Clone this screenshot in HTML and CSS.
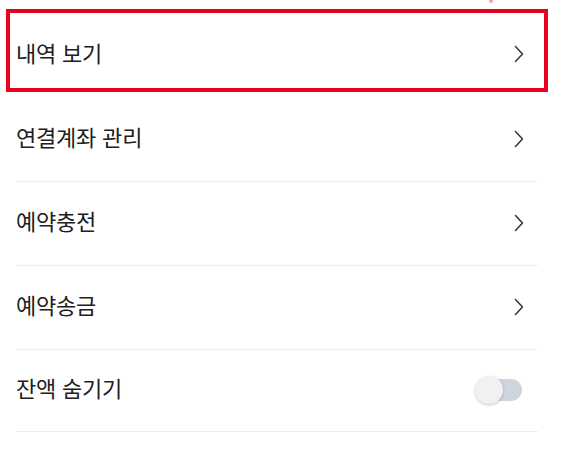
FILE: index.html
```html
<!DOCTYPE html>
<html lang="ko">
<head>
<meta charset="utf-8">
<link rel="stylesheet" href="styles.css">
</head>
<body>
<div class="page">
  <span class="mark"></span>
  <ul class="menu">
    <li class="row row-first highlighted">
      <span class="label">내역 보기</span>
      <svg class="chev" viewBox="0 0 10 18" width="10" height="18"><polyline points="1.5,1.5 8.5,9 1.5,16.5" fill="none" stroke="#333" stroke-width="1.5" stroke-linecap="round" stroke-linejoin="round"/></svg>
    </li>
    <li class="row">
      <span class="label">연결계좌 관리</span>
      <svg class="chev" viewBox="0 0 10 18" width="10" height="18"><polyline points="1.5,1.5 8.5,9 1.5,16.5" fill="none" stroke="#333" stroke-width="1.5" stroke-linecap="round" stroke-linejoin="round"/></svg>
    </li>
    <li class="row">
      <span class="label">예약충전</span>
      <svg class="chev" viewBox="0 0 10 18" width="10" height="18"><polyline points="1.5,1.5 8.5,9 1.5,16.5" fill="none" stroke="#333" stroke-width="1.5" stroke-linecap="round" stroke-linejoin="round"/></svg>
    </li>
    <li class="row">
      <span class="label">예약송금</span>
      <svg class="chev" viewBox="0 0 10 18" width="10" height="18"><polyline points="1.5,1.5 8.5,9 1.5,16.5" fill="none" stroke="#333" stroke-width="1.5" stroke-linecap="round" stroke-linejoin="round"/></svg>
    </li>
    <li class="row row-last">
      <span class="label">잔액 숨기기</span>
      <span class="toggle"><span class="knob"></span></span>
    </li>
  </ul>
</div>
</body>
</html>
```

FILE: styles.css
```css
* { box-sizing: border-box; }
html, body { margin: 0; padding: 0; background: #fff; }
body {
  font-family: "Noto Sans CJK KR", "Noto Sans", sans-serif;
  color: #202020;
  width: 561px;
  height: 453px;
  overflow: hidden;
}
.page {
  position: relative;
  padding: 13px 23px 0 16px;
}
.mark {
  position: absolute;
  left: 489px;
  top: 0;
  width: 4px;
  height: 3px;
  background: #f2a7b0;
  border-radius: 0 0 2px 2px;
}
.menu {
  list-style: none;
  margin: 0;
  padding: 0;
}
.row {
  position: relative;
  display: flex;
  align-items: center;
  justify-content: space-between;
  height: 84px;
  border-bottom: 1px solid #eeeeee;
}
.row-first { height: 85px; border-bottom-color: transparent; }
.row-last { height: 82px; }
.highlighted::after {
  content: "";
  position: absolute;
  left: -10px;
  right: -10px;
  top: -4px;
  bottom: 5px;
  border: 4px solid #ea0020;
}
.label {
  font-size: 22px;
  line-height: 1;
  letter-spacing: -0.2px;
  margin-bottom: 7px;
}
.chev { margin-right: 14px; margin-bottom: 2px; display: block; }
.toggle {
  position: relative;
  width: 44px;
  height: 22px;
  margin-right: 16px;
  margin-bottom: 2px;
  border-radius: 11px;
  background: #cfd5dc;
}
.knob {
  position: absolute;
  left: -3px;
  top: -3px;
  width: 28px;
  height: 28px;
  border-radius: 50%;
  background: #eff1f3;
  box-shadow: 0 1px 3px rgba(0,0,0,0.22);
}
```
